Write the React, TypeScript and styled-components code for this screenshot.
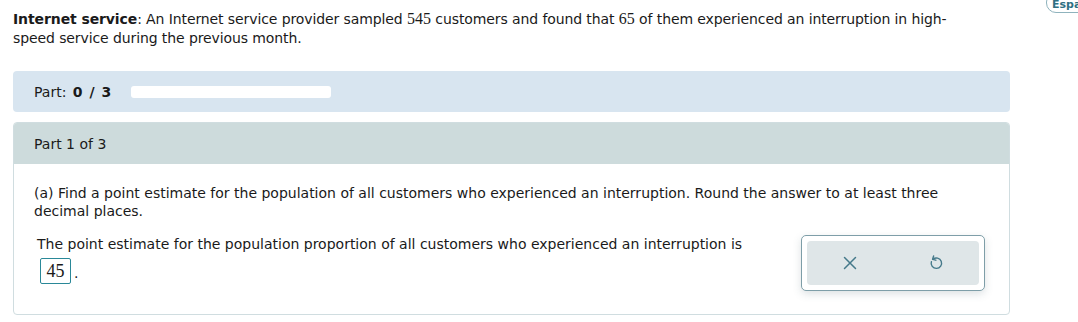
import styled, { createGlobalStyle } from 'styled-components';

const GlobalStyle = createGlobalStyle`
  body {
    margin: 0;
    background: #fff;
    font-family: "DejaVu Sans", Verdana, sans-serif;
    font-size: 14px;
    color: #1a1a1a;
  }
`;

const Page = styled.div`
  position: relative;
  padding: 10px 68px 0 13px;
  width: 1078px;
  box-sizing: border-box;
  overflow: hidden;
  height: 322px;
`;

const LangButton = styled.button`
  position: absolute;
  top: -8px;
  left: 1046px;
  height: 21px;
  padding: 4px 10px 0 5px;
  border: 1px solid #8fb3bd;
  border-radius: 10px;
  background: #fff;
  color: #2f6f82;
  font-family: inherit;
  font-size: 11px;
  font-weight: bold;
  white-space: nowrap;
`;

const Intro = styled.p`
  margin: 0 0 23px;
  line-height: 19px;
  width: 962px;
  letter-spacing: -0.1px;
`;

const Num = styled.span`
  font-family: "Liberation Serif", "Times New Roman", serif;
  font-size: 16px;
  line-height: 1;
  letter-spacing: 0;
`;

const ProgressBar = styled.div`
  display: flex;
  align-items: center;
  height: 41px;
  padding: 0 21px;
  background: #d8e5f0;
  border-radius: 4px;
  margin-bottom: 10px;
`;

const PartLabel = styled.span`
  min-width: 97px;
  word-spacing: 2px;
`;

const Track = styled.div`
  width: 200px;
  height: 12px;
  background: #fff;
  border-radius: 3px;
`;

const Card = styled.div`
  border: 1px solid #d0dde0;
  border-radius: 4px;
  overflow: hidden;
  height: 193px;
  box-sizing: border-box;
`;

const CardHeader = styled.div`
  display: flex;
  align-items: center;
  height: 41px;
  padding: 0 20px;
  background: #cddbdc;
`;

const CardBody = styled.div`
  padding: 20px 20px 0 20px;
`;

const Question = styled.p`
  margin: 0 0 15px;
  line-height: 18px;
  width: 925px;
`;

const AnswerRow = styled.div`
  display: flex;
  justify-content: space-between;
  padding-left: 3px;
`;

const Sentence = styled.div`
  line-height: 18px;
`;

const InputLine = styled.div`
  display: flex;
  align-items: flex-end;
  gap: 3px;
  margin-top: 5px;
`;

const AnswerBox = styled.span`
  display: inline-flex;
  align-items: center;
  justify-content: center;
  width: 31px;
  height: 26px;
  box-sizing: border-box;
  border: 1px solid #2a8898;
  border-radius: 2px;
  margin-left: 3px;
  font-family: "Liberation Serif", "Times New Roman", serif;
  font-size: 18px;
`;

const Dot = styled.span`
  line-height: 13px;
  padding-bottom: 4px;
`;

const ToolFrame = styled.div`
  margin-right: 4px;
  padding: 5px;
  border: 1px solid #7e9ea8;
  border-radius: 5px;
  background: #fff;
  box-shadow: 0 3px 8px rgba(60, 90, 100, 0.18);
`;

const ToolGroup = styled.div`
  display: flex;
  justify-content: space-around;
  align-items: center;
  width: 172px;
  height: 44px;
  background: #dfe6e8;
  border-radius: 4px;
`;

const IconButton = styled.button`
  display: flex;
  align-items: center;
  justify-content: center;
  width: 40px;
  height: 40px;
  border: none;
  background: none;
  padding: 0;
  color: #45798a;
`;

const App = () => {
  return (
    <>
      <GlobalStyle />
      <Page>
        <LangButton>Español</LangButton>
        <Intro>
          <b>Internet service</b>: An Internet service provider sampled <Num>545</Num> customers and found
          that <Num>65</Num> of them experienced an interruption in high-speed service during the previous
          month.
        </Intro>

        <ProgressBar>
          <PartLabel>
            Part: <b>0 / 3</b>
          </PartLabel>
          <Track />
        </ProgressBar>

        <Card>
          <CardHeader>Part 1 of 3</CardHeader>
          <CardBody>
            <Question>
              (a) Find a point estimate for the population of all customers who experienced an interruption.
              Round the answer to at least three decimal places.
            </Question>
            <AnswerRow>
              <Sentence>
                The point estimate for the population proportion of all customers who experienced an
                interruption is
                <InputLine>
                  <AnswerBox>45</AnswerBox>
                  <Dot>.</Dot>
                </InputLine>
              </Sentence>
              <ToolFrame>
                <ToolGroup>
                  <IconButton aria-label="clear">
                    <svg width="14" height="14" viewBox="0 0 14 14" fill="none" stroke="currentColor" strokeWidth="1.5" strokeLinecap="round">
                      <path d="M1.5 1.5 L12.5 12.5 M12.5 1.5 L1.5 12.5" />
                    </svg>
                  </IconButton>
                  <IconButton aria-label="undo">
                    <svg width="14" height="16" viewBox="0 0 14 16" fill="none" stroke="currentColor" strokeWidth="1.4" strokeLinecap="round" strokeLinejoin="round">
                      <path d="M4 4.2 A5.2 5.2 0 1 1 2.4 6.6" />
                      <path d="M4.6 1 L3.6 4.3 L6.8 5.2" />
                    </svg>
                  </IconButton>
                </ToolGroup>
              </ToolFrame>
            </AnswerRow>
          </CardBody>
        </Card>
      </Page>
    </>
  );
};

export default App;
